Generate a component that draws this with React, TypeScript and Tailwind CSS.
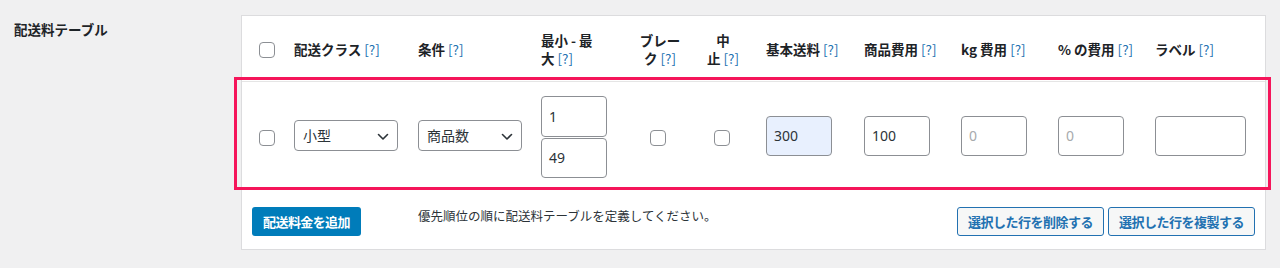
import React from "react";

const font = { fontFamily: '"Noto Sans CJK JP", "Noto Sans", sans-serif' };

function Tip() {
  return <span className="font-normal text-[#2271b1]"> [?]</span>;
}

function Checkbox() {
  return <span className="block w-[16px] h-[16px] rounded-[4px] border border-[#8c8f94] bg-white" />;
}

function Chevron() {
  return (
    <svg width="12" height="8" viewBox="0 0 12 8" className="absolute right-[8px] top-[12px]">
      <path d="M1.5 1.5 L6 6 L10.5 1.5" fill="none" stroke="#2c3338" strokeWidth="1.6" strokeLinecap="round" strokeLinejoin="round" />
    </svg>
  );
}

function Select({ label }: { label: string }) {
  return (
    <div className="relative w-[104px] h-[31px] rounded-[4px] border border-[#8c8f94] bg-white flex items-center pl-[8px] text-[14px] text-[#2c3338]">
      {label}
      <Chevron />
    </div>
  );
}

function Input({ value, w = 66, h = 40, placeholder = false, bg = "bg-white" }: { value: string; w?: number; h?: number; placeholder?: boolean; bg?: string }) {
  return (
    <div
      className={`rounded-[4px] border border-[#8c8f94] ${bg} flex items-center pl-[7px] text-[14px] ${placeholder ? "text-[#a7aaad]" : "text-[#2c3338]"}`}
      style={{ width: w, height: h, fontFamily: '"Noto Sans", sans-serif' }}
    >
      {value}
    </div>
  );
}

export default function App() {
  return (
    <div className="relative w-[1280px] h-[268px] bg-[#f0f0f1] flex text-[#1d2327]" style={font}>
      <div className="w-[241px] pl-[14px] pt-[19px] text-[13.5px] font-semibold">配送料テーブル</div>
      <div className="mt-[15px] w-[1025px] h-[235px] border border-[#dcdcde] bg-white flex flex-col">
        {/* header */}
        <div className="h-[66px] flex items-center text-[13.5px] font-semibold leading-[18px] border-b border-[#e5e5e5]">
          <div className="w-[52px] pl-[17px] pt-[2px]"><Checkbox /></div>
          <div className="w-[124px] whitespace-nowrap">配送クラス<Tip /></div>
          <div className="w-[123px] whitespace-nowrap">条件<Tip /></div>
          <div className="w-[89px] whitespace-nowrap">最小 - 最<br />大<Tip /></div>
          <div className="w-[60px] whitespace-nowrap text-center">ブレー<br />ク<Tip /></div>
          <div className="w-[66px] whitespace-nowrap text-center">中<br />止<Tip /></div>
          <div className="w-[108px] pl-[10px] whitespace-nowrap">基本送料<Tip /></div>
          <div className="w-[97px] whitespace-nowrap">商品費用<Tip /></div>
          <div className="w-[97px] whitespace-nowrap">kg 費用<Tip /></div>
          <div className="w-[97px] whitespace-nowrap">% の費用<Tip /></div>
          <div className="flex-1 whitespace-nowrap">ラベル<Tip /></div>
        </div>
        {/* row */}
        <div className="h-[108px] flex items-center border-b border-[#e5e5e5]">
          <div className="w-[52px] pl-[17px] pt-[4px]"><Checkbox /></div>
          <div className="w-[124px]"><Select label="小型" /></div>
          <div className="w-[123px]"><Select label="商品数" /></div>
          <div className="w-[89px] flex flex-col gap-[1px] pt-[2px]">
            <Input value="1" h={41} />
            <Input value="49" />
          </div>
          <div className="w-[60px] flex justify-center pt-[4px] pr-[4px]"><Checkbox /></div>
          <div className="w-[66px] flex justify-center pt-[4px] pr-[2px]"><Checkbox /></div>
          <div className="w-[108px] pl-[10px]"><Input value="300" bg="bg-[#e8f0fe]" /></div>
          <div className="w-[97px]"><Input value="100" /></div>
          <div className="w-[97px]"><Input value="0" placeholder /></div>
          <div className="w-[97px]"><Input value="0" placeholder /></div>
          <div className="flex-1"><Input value="" w={91} /></div>
        </div>
        {/* footer */}
        <div className="flex items-center pt-[17px]">
          <div className="w-[176px] pl-[10px]">
            <button className="w-[109px] h-[29px] rounded-[3px] bg-[#007cba] text-white text-[13px] font-semibold tracking-[-0.6px] flex items-center justify-center">配送料金を追加</button>
          </div>
          <div className="flex-1 text-[12.5px] text-[#2c3338] pb-[10px]">優先順位の順に配送料テーブルを定義してください。</div>
          <div className="flex gap-[4px] pr-[10px]">
            <button className="w-[147px] h-[29px] rounded-[3px] border border-[#2271b1] bg-[#f6f7f7] text-[#2271b1] text-[13px] font-semibold tracking-[-0.5px] flex items-center justify-center">選択した行を削除する</button>
            <button className="w-[147px] h-[29px] rounded-[3px] border border-[#2271b1] bg-[#f6f7f7] text-[#2271b1] text-[13px] font-semibold tracking-[-0.5px] flex items-center justify-center">選択した行を複製する</button>
          </div>
        </div>
      </div>
      {/* highlight overlay */}
      <div className="absolute left-[234px] top-[77px] w-[1037px] h-[113px] border-[3px] border-[#f5155a] pointer-events-none" />
    </div>
  );
}
